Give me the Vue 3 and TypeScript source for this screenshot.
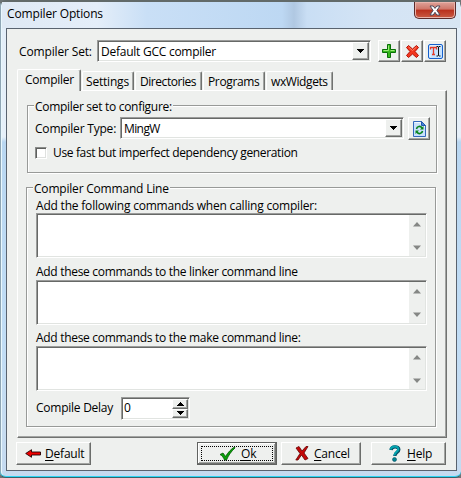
<script setup lang="ts">
import { ref } from 'vue'

const tabs = [
  { name: 'Compiler', cls: 't-compiler' },
  { name: 'Settings', cls: 't-settings' },
  { name: 'Directories', cls: 't-directories' },
  { name: 'Programs', cls: 't-programs' },
  { name: 'wxWidgets', cls: 't-widgets' },
]
const active = ref('Compiler')
const fields = [
  { label: 'Add the following commands when calling compiler:', cls: 'f-compiler' },
  { label: 'Add these commands to the linker command line', cls: 'f-linker' },
  { label: 'Add these commands to the make command line:', cls: 'f-make' },
]
</script>

<template>
  <div class="window">
    <header class="title">
      <span class="title-text">Compiler Options</span>
      <button class="close" aria-label="Close">
        <svg width="12" height="11" viewBox="0 0 12 11"><path d="M1 1h3.200L6 3.400 7.800 1H11L7.900 5.400 11 10H7.800L6 7.300 4.200 10H1L4.100 5.400z" fill="#fff" stroke="#4d4b5c" stroke-width="1" /></svg>
      </button>
    </header>
    <main class="client">
      <div class="toolbar">
        <span class="set-label">Compiler Set:</span>
        <div class="combo set-combo">
          <span class="set-value">Default GCC compiler</span>
          <button class="drop"><svg width="7" height="4" shape-rendering="crispEdges"><path d="M0 0h7v1h-1v1h-1v1h-1v1h-1v-1h-1v-1h-1v-1h-1z" /></svg></button>
        </div>
        <button class="tool first">
          <svg width="14" height="14" viewBox="0 0 14 14"><path d="M5.500.500h3v5h5v3h-5v5h-3v-5h-5v-3h5z" fill="#37b81d" stroke="#087006" stroke-linejoin="round" /><path d="M6.500 1.500v5h-5M8.500 6.500h4" fill="none" stroke="#9bec78" /></svg>
        </button>
        <button class="tool">
          <svg width="13" height="13" viewBox="0 0 13 13"><path d="M2.500.500L6.500 4 10.500.500l2 2L9 6.500l3.500 4-2 2-4-3.500-4 3.500-2-2 3.500-4-3.500-4z" fill="#f2361c" stroke="#b51208" stroke-linejoin="round" /><path d="M2.500 2l4 3.500L10.500 2" fill="none" stroke="#ff8266" /></svg>
        </button>
        <button class="tool">
          <svg width="15" height="15" viewBox="0 0 15 15"><rect x=".5" y=".5" width="14" height="14" rx="1.500" fill="#c5e2ff" stroke="#1560cd" /><path d="M2 13V2h11" fill="none" stroke="#f2f9ff" /><path d="M2.500 5.500v-2h6v2M5.500 3.500v7M4 10.500h3" fill="none" stroke="#e43b28" stroke-width="1.300" /><path d="M8.500 2.500h1.500l.5.500.5-.5h1.500M10.500 3v8.500M8.500 12h1.500l.5-.5.5.5h1.500" fill="none" stroke="#111" /></svg>
        </button>
      </div>

      <nav class="tabs">
        <button v-for="t in tabs" :key="t.name" class="tab" :class="[t.cls, { active: active === t.name }]" @click="active = t.name">
          <span>{{ t.name }}</span>
        </button>
      </nav>

      <section class="page">
        <fieldset class="group type-group">
          <span class="caption"><span class="c-set">Compiler set to configure:</span></span>
          <div class="type-row">
            <span class="type-label">Compiler Type:</span>
            <div class="combo type-combo">
              <span class="type-value">MingW</span>
              <button class="drop"><svg width="7" height="4" shape-rendering="crispEdges"><path d="M0 0h7v1h-1v1h-1v1h-1v1h-1v-1h-1v-1h-1v-1h-1z" /></svg></button>
            </div>
            <button class="tool refresh">
              <svg width="13" height="16" viewBox="0 0 13 16"><path d="M.5.500h8l4 4v11H.5z" fill="#c9e0fc" stroke="#3268bd" /><path d="M1.500 1.500h6l1 3h3v2" fill="none" stroke="#f3f9ff" /><path d="M8.500.500v4h4z" fill="#4387dd" stroke="#2358ad" /><path d="M3.500 8c.5-3 4-3.500 5.500-1M9.500 10c-.5 3-4 3.500-5.500 1" fill="none" stroke="#07831b" stroke-width="1.600" /><path d="M10.500 5v3.500H7zM2.500 13V9.500H6z" fill="#07831b" /></svg>
            </button>
          </div>
          <label class="check-row"><i class="check" /><span class="check-text">Use fast but imperfect dependency generation</span></label>
        </fieldset>

        <fieldset class="group command-group">
          <span class="caption"><span class="c-line">Compiler Command Line</span></span>
          <div v-for="f in fields" :key="f.cls" class="field" :class="f.cls">
            <span class="field-label">{{ f.label }}</span>
            <div class="memo">
              <div class="scroll">
                <svg width="8" height="5" viewBox="0 0 8 5"><path d="M4 0L8 4.500H0z" fill="#858785" /></svg>
                <svg width="8" height="5" viewBox="0 0 8 5"><path d="M0 .5h8L4 5z" fill="#858785" /></svg>
              </div>
            </div>
          </div>
          <div class="delay">
            <span class="delay-label">Compile Delay</span>
            <div class="spin">
              <span>0</span>
              <div class="spin-buttons">
                <button><svg width="7" height="4" shape-rendering="crispEdges"><path d="M3 0h1v1h1v1h1v1h1v1H0v-1h1v-1h1v-1h1z" /></svg></button>
                <button><svg width="7" height="4" shape-rendering="crispEdges"><path d="M0 0h7v1h-1v1h-1v1h-1v1h-1v-1h-1v-1h-1v-1h-1z" /></svg></button>
              </div>
            </div>
          </div>
        </fieldset>
      </section>

      <footer class="footer">
        <button class="btn default">
          <svg width="16" height="9" viewBox="0 0 16 9"><path d="M.7 4.500L6.500.700v2.300h9v3h-9v2.300z" fill="#f00000" stroke="#200" stroke-width=".9" /></svg>
          <span><u>D</u>efault</span>
        </button>
        <button class="btn ok">
          <svg width="17" height="15" viewBox="0 0 17 15"><path d="M1 8.500l3-1.500 2.500 3.500C9 6.500 12 3 15.500 1L16 2C12 5.500 9.500 9.500 7.500 14H5.500C4.500 11.500 3 9.500 1 8.500z" fill="#08a008" stroke="#045804" stroke-width=".8" /></svg>
          <span><u>O</u>k</span>
        </button>
        <button class="btn cancel">
          <svg width="14" height="15" viewBox="0 0 14 15"><path d="M1 2l3-1.500 3 4.500 4-4.500h2L9 7l4 5.500-3 1.500-3.500-5L3 14H.8L5 7.500z" fill="#c40808" stroke="#600" stroke-width=".8" /></svg>
          <span><u>C</u>ancel</span>
        </button>
        <button class="btn help">
          <svg width="12" height="17" viewBox="0 0 12 17"><path d="M2 5C2.500.800 9.800 1 9.800 4.500 9.800 7.500 6 7 5.800 11" fill="none" stroke="#054f66" stroke-width="3.400" /><path d="M1.500 4.500C2.500.500 9.200.500 9.300 4 9.300 7 5.500 7 5.300 10.500" fill="none" stroke="#04a5b0" stroke-width="2" /><circle cx="5.500" cy="14.500" r="2" fill="#04848f" stroke="#054f66" stroke-width=".6" /></svg>
          <span><u>H</u>elp</span>
        </button>
      </footer>
    </main>
  </div>
</template>

<style>
body {
  margin: 0;
  background: #6d7475;
}
</style>

<style scoped>
* {
  box-sizing: border-box;
}
button {
  font: inherit;
  color: inherit;
  padding: 0;
  margin: 0;
  border: 0;
  background: #eef0ee;
}
svg {
  display: block;
  flex: none;
}
span {
  white-space: nowrap;
}
.window {
  width: 461px;
  height: 478px;
  padding: 0 4px 7px 6px;
  border-top: 2px solid #626a69;
  border-bottom: 1px solid #37626b;
  border-radius: 6px 7px 6px 6px;
  box-shadow: inset 0 -1px #2bd4f4, inset 1px 0 #8fa6b5, inset 2px 0 #e9f8fd;
  background: linear-gradient(180deg, #e2edf8 0, #e6f0f9 135px, #b9d7f1 140px, #c1ddf5 340px, #c7dcf0 430px, #c4daf0 100%);
  font: 12px/16px "Open Sans", "Noto Sans", sans-serif;
  color: #000;
}
.title {
  height: 26px;
  margin: 0 -3px 0 -4px;
  padding-left: 5px;
  display: flex;
  align-items: flex-start;
  background: linear-gradient(90deg, #dfe9f4 0, #e4eef9 95px, #c9dff6 145px, #bdd8f3 280px, #b0c8e2 292px, #c9def4 305px, #d4e4f5 370px, #d7e5f3 100%);
}
.title-text {
  padding-top: 4px;
  flex: 1;
  letter-spacing: -0.15px;
}
.close {
  width: 42px;
  height: 17px;
  margin-right: 4px;
  display: flex;
  justify-content: center;
  align-items: center;
  border: 1px solid #5c2b2b;
  border-top: 0;
  border-radius: 0 0 5px 5px;
  box-shadow: inset 0 0 0 1px #e9b3aa;
  background: linear-gradient(#dfa39a 0, #cf7568 45%, #b92f1c 50%, #c95b43 100%);
}
.client {
  height: 443px;
  width: 451px;
  padding: 11px 0 0 9px;
  border: 1px solid #59636f;
  background: #eef0ee;
}
.toolbar {
  display: flex;
  height: 22px;
  padding-left: 3px;
}
.set-label {
  width: 78px;
  padding-top: 4px;
  letter-spacing: -0.15px;
}
.combo {
  display: flex;
  justify-content: space-between;
  height: 22px;
  background: #fff;
  border: 1px solid;
  border-color: #9a9b9a #fff #fff #9a9b9a;
  box-shadow: inset 1px 1px #676967, inset -1px -1px #e1e4e1;
}
.combo span {
  padding: 3px 0 0 3px;
  letter-spacing: -0.25px;
}
.combo .type-value {
  letter-spacing: -0.6px;
}
.set-combo {
  width: 274px;
}
.drop {
  width: 17px;
  margin: 1px;
  display: flex;
  justify-content: center;
  align-items: center;
}
.drop,
.tool,
.btn,
.spin-buttons button {
  border: 1px solid;
  border-color: #fff #6b6d6b #6b6d6b #fff;
  box-shadow: inset -1px -1px #a2a4a2;
}
.tool {
  width: 22px;
  height: 22px;
  display: flex;
  justify-content: center;
  align-items: center;
  margin-left: 1px;
}
.tool.first {
  margin-left: 7px;
}
.tabs {
  display: flex;
  align-items: flex-end;
  height: 21px;
  margin: 7px 0 0 1px;
}
.tab {
  height: 19px;
  margin-right: 1px;
  padding: 1px 0 0 4px;
  text-align: left;
  border: 1px solid;
  border-color: #fff #707270 transparent #fff;
  border-bottom: 0;
  border-radius: 2px 2px 0 0;
  box-shadow: inset -1px 0 #a2a4a2;
}
.tab span {
  display: block;
}
.tab.active {
  height: 22px;
  margin-bottom: -1px;
  padding: 0 0 2px 7px;
}
.t-compiler { width: 64px; letter-spacing: -0.25px; }
.t-settings { width: 52px; padding-left: 3px; letter-spacing: -0.2px; }
.t-directories { width: 67px; letter-spacing: -0.45px; }
.t-programs { width: 62px; letter-spacing: -0.35px; }
.t-widgets { width: 67px; letter-spacing: -0.4px; }
.page {
  width: 430px;
  height: 348px;
  margin-left: 1px;
  padding: 14px 0 0 8px;
  border: 1px solid;
  border-color: #fff #707270 #707270 #fff;
  box-shadow: inset -1px -1px #a2a4a2;
}
.group {
  margin: 0;
  padding: 0;
  min-width: 0;
  border: 1px solid #989a98;
  box-shadow: 1px 1px #fff, inset 1px 1px #fff;
}
.caption {
  display: block;
  width: max-content;
  height: 16px;
  margin: -7px 0 0 6px;
  padding: 0 1px;
  background: #eef0ee;
}
.c-set {
  letter-spacing: -0.3px;
}
.c-line {
  letter-spacing: -0.2px;
}
.type-group {
  width: 410px;
  height: 68px;
  margin-left: 1px;
}
.type-row {
  display: flex;
  padding: 2px 0 0 7px;
}
.type-label {
  width: 85px;
  padding-top: 4px;
  letter-spacing: -0.2px;
}
.type-combo {
  width: 284px;
}
.refresh {
  margin-left: 4px;
  height: 23px;
}
.check-row {
  display: flex;
  align-items: center;
  height: 16px;
  margin: 5px 0 0 7px;
}
.check-text {
  margin-left: -1px;
  letter-spacing: -0.35px;
}
.check {
  width: 12px;
  height: 12px;
  margin: 0 7px 0 0;
  border: 1px solid;
  border-color: #8a8c8a #fff #fff #8a8c8a;
  box-shadow: inset 1px 1px #5e605e, inset -1px -1px #dfe1df;
  background: #fff;
}
.command-group {
  width: 410px;
  height: 240px;
  margin-top: 14px;
}
.field {
  padding-left: 9px;
}
.field-label {
  display: block;
  height: 16px;
}
.f-compiler { padding-top: 1px; letter-spacing: -0.2px; }
.f-linker { padding-top: 6px; letter-spacing: -0.3px; }
.f-make { padding-top: 5px; letter-spacing: -0.3px; }
.f-compiler .field-label { height: 15px; }
.f-make .field-label { height: 16px; }
.memo {
  width: 391px;
  height: 45px;
  display: flex;
  justify-content: flex-end;
  border: 1px solid;
  border-color: #9a9b9a #fff #fff #9a9b9a;
  box-shadow: inset 1px 1px #676967, inset -1px -1px #e1e4e1;
  background: #fff;
}
.scroll {
  width: 16px;
  margin: 1px;
  padding: 7px 0 6px;
  display: flex;
  flex-direction: column;
  justify-content: space-between;
  align-items: center;
  background: #eef0ee;
}
.delay {
  display: flex;
  padding: 6px 0 0 9px;
}
.delay-label {
  width: 85px;
  padding-top: 3px;
  letter-spacing: -0.25px;
}
.spin {
  width: 69px;
  height: 23px;
  padding: 1px;
  display: flex;
  justify-content: space-between;
  border: 1px solid;
  border-color: #9a9b9a #fff #fff #9a9b9a;
  box-shadow: inset 1px 1px #676967, inset -1px -1px #e1e4e1;
  background: #fff;
}
.spin > span {
  padding: 1px 0 0 1px;
}
.spin-buttons {
  display: flex;
  flex-direction: column;
}
.spin-buttons button {
  width: 16px;
  flex: 1;
  display: flex;
  justify-content: center;
  align-items: center;
}
.footer {
  display: flex;
  margin-top: 4px;
}
.btn {
  height: 23px;
  display: flex;
  align-items: center;
  letter-spacing: -0.2px;
}
.btn u {
  text-decoration: underline;
  text-underline-offset: 2px;
}
.default {
  width: 75px;
  padding-left: 8px;
  gap: 4px;
}
.ok {
  width: 80px;
  margin-left: 106px;
  padding-left: 21px;
  gap: 5px;
  border-color: #606260;
  box-shadow: inset -1px -1px #707270, inset 1px 1px #fff, inset -2px -2px #a2a4a2;
  outline: 1px dotted #000;
  outline-offset: -5px;
}
.cancel {
  width: 80px;
  margin-left: 4px;
  padding-left: 13px;
  gap: 5px;
}
.help {
  width: 75px;
  margin-left: 10px;
  padding-left: 17px;
  gap: 6px;
}
</style>
